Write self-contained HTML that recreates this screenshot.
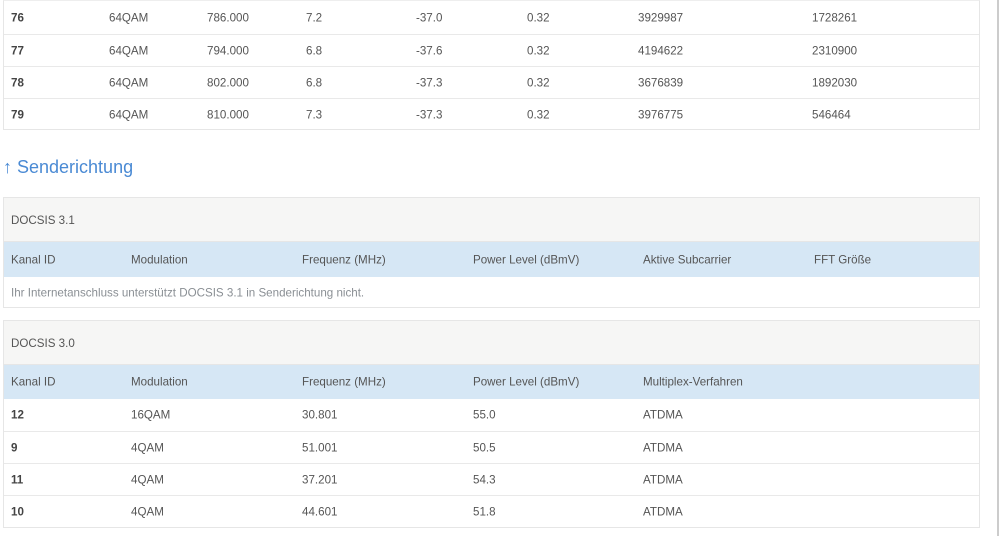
<!DOCTYPE html>
<html><head><meta charset="utf-8"><style>
*{margin:0;padding:0;box-sizing:border-box}
body{width:999px;height:536px;background:#fff;font-family:"Liberation Sans",sans-serif;font-size:11.6px;color:#555;position:relative;overflow:hidden}
.sb{position:absolute;left:997px;top:0;width:2px;height:536px;background:#ccc}
.box{position:absolute;left:3px;width:977px;border:1px solid #e6e6e6}
.row{position:relative;height:32px;border-top:1px solid #e9e9e9}
.row:first-child{border-top:none}
.row span{position:absolute;top:50%;transform:translateY(-50%);white-space:nowrap}
.b{font-weight:bold;color:#444}
.hd{height:44px;background:#f6f6f5;border-bottom:1px solid #e6e6e6;position:relative}
.hd span{position:absolute;left:7px;top:16px}
.th{height:35px;background:#d6e7f5;position:relative;border-top:none}
h2{position:absolute;left:3px;top:157px;font-weight:normal;font-size:18px;color:#4a8ad4}
</style></head><body>
<div class="sb"></div>
<div class="box" style="top:0;height:130px;border-top-color:#eee">
<div class="row" style="height:33px"><span class="b" style="left:7px">76</span><span style="left:105px">64QAM</span><span style="left:203px">786.000</span><span style="left:302px">7.2</span><span style="left:412px">-37.0</span><span style="left:523px">0.32</span><span style="left:634px">3929987</span><span style="left:808px">1728261</span></div>
<div class="row"><span class="b" style="left:7px">77</span><span style="left:105px">64QAM</span><span style="left:203px">794.000</span><span style="left:302px">6.8</span><span style="left:412px">-37.6</span><span style="left:523px">0.32</span><span style="left:634px">4194622</span><span style="left:808px">2310900</span></div>
<div class="row"><span class="b" style="left:7px">78</span><span style="left:105px">64QAM</span><span style="left:203px">802.000</span><span style="left:302px">6.8</span><span style="left:412px">-37.3</span><span style="left:523px">0.32</span><span style="left:634px">3676839</span><span style="left:808px">1892030</span></div>
<div class="row"><span class="b" style="left:7px">79</span><span style="left:105px">64QAM</span><span style="left:203px">810.000</span><span style="left:302px">7.3</span><span style="left:412px">-37.3</span><span style="left:523px">0.32</span><span style="left:634px">3976775</span><span style="left:808px">546464</span></div>
</div>
<h2>↑ Senderichtung</h2>
<div class="box" style="top:197px;height:111px">
<div class="hd"><span>DOCSIS 3.1</span></div>
<div class="row th"><span style="left:7px">Kanal ID</span><span style="left:127px">Modulation</span><span style="left:298px">Frequenz (MHz)</span><span style="left:469px">Power Level (dBmV)</span><span style="left:639px">Aktive Subcarrier</span><span style="left:810px">FFT Größe</span></div>
<div class="row" style="border-top:none;height:31px"><span style="left:7px;color:#8a8f94">Ihr Internetanschluss unterstützt DOCSIS 3.1 in Senderichtung nicht.</span></div>
</div>
<div class="box" style="top:320px;height:208px">
<div class="hd"><span>DOCSIS 3.0</span></div>
<div class="row th" style="height:34px"><span style="left:7px">Kanal ID</span><span style="left:127px">Modulation</span><span style="left:298px">Frequenz (MHz)</span><span style="left:469px">Power Level (dBmV)</span><span style="left:639px">Multiplex-Verfahren</span></div>
<div class="row" style="border-top:none"><span class="b" style="left:7px">12</span><span style="left:127px">16QAM</span><span style="left:298px">30.801</span><span style="left:469px">55.0</span><span style="left:639px">ATDMA</span></div>
<div class="row"><span class="b" style="left:7px">9</span><span style="left:127px">4QAM</span><span style="left:298px">51.001</span><span style="left:469px">50.5</span><span style="left:639px">ATDMA</span></div>
<div class="row"><span class="b" style="left:7px">11</span><span style="left:127px">4QAM</span><span style="left:298px">37.201</span><span style="left:469px">54.3</span><span style="left:639px">ATDMA</span></div>
<div class="row"><span class="b" style="left:7px">10</span><span style="left:127px">4QAM</span><span style="left:298px">44.601</span><span style="left:469px">51.8</span><span style="left:639px">ATDMA</span></div>
</div>
</body></html>
